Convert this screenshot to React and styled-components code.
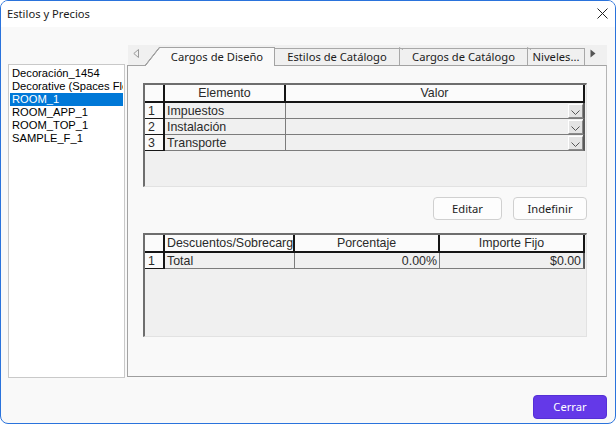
import React from "react";
import styled, { createGlobalStyle } from "styled-components";

const Global = createGlobalStyle`
  html, body { margin: 0; padding: 0; background: #ffffff; }
  * { box-sizing: border-box; }
`;

const Window = styled.div`
  width: 616px;
  height: 424px;
  border: 1px solid #2a73dc;
  border-radius: 8px;
  background: #f9f9f9;
  overflow: hidden;
  display: flex;
  flex-direction: column;
  font-family: "Noto Sans", "Open Sans", sans-serif;
  color: #1b1b1b;
`;

const TitleBar = styled.div`
  height: 26px;
  background: #ffffff;
  display: flex;
  align-items: center;
  justify-content: space-between;
  padding: 0 7px 2px 6px;
  font-size: 11.2px;
`;

const Body = styled.div`
  height: 351px;
  display: flex;
  gap: 2px;
  padding: 18px 8px 0 7px;
`;

const ListBox = styled.div`
  margin-top: 19px;
  width: 117px;
  height: 314px;
  background: #ffffff;
  border: 1px solid #c9c9c9;
  padding: 2px 1px;
  overflow: hidden;
  font-family: "Liberation Sans", Arial, sans-serif;
  font-size: 11.2px;
`;

const ListItem = styled.div`
  height: 13px;
  line-height: 13px;
  padding-left: 2px;
  white-space: nowrap;
  overflow: hidden;
  color: ${(p) => (p.$selected ? "#ffffff" : "#000000")};
  background: ${(p) => (p.$selected ? "#0078d7" : "transparent")};
`;

const TabArea = styled.div`
  flex: 1;
  display: flex;
  flex-direction: column;
`;

const TabStrip = styled.div`
  height: 20px;
  margin-left: 1px;
  background: #f0f0f0;
  display: flex;
  align-items: flex-end;
  font-size: 11.2px;
`;

const ScrollButton = styled.div`
  width: ${(p) => p.$w}px;
  height: 20px;
  display: flex;
  align-items: center;
  padding-left: ${(p) => p.$pad}px;
  padding-bottom: 3px;
`;

const ActiveTab = styled.div`
  position: relative;
  z-index: 1;
  width: 130px;
  height: 19px;
  margin-bottom: -1px;
  display: flex;
`;

const Slant = styled.span`
  width: 15px;
  height: 19px;
  background: linear-gradient(
    to bottom right,
    transparent calc(50% - 1px),
    #a3a3a3 calc(50% - 0.5px),
    #a3a3a3 calc(50% + 0.3px),
    #f9f9f9 calc(50% + 0.8px)
  );
`;

const ActiveLabel = styled.span`
  flex: 1;
  background: #f9f9f9;
  border-top: 1px solid #a3a3a3;
  border-right: 1px solid #a3a3a3;
  display: flex;
  align-items: center;
  justify-content: center;
  padding: 0 0 1px 0;
  color: #1b1b1b;
`;

const Tab = styled.div`
  position: relative;
  width: ${(p) => p.$w}px;
  height: 17px;
  border-top: 1px solid #a8a8a8;
  border-right: 1px solid #a8a8a8;
  display: flex;
  align-items: center;
  justify-content: center;
  padding-bottom: 1px;
  white-space: nowrap;
  color: #1b1b1b;

  &::after {
    content: "";
    position: absolute;
    right: -4px;
    top: -2px;
    width: 4px;
    height: 3px;
    background: linear-gradient(
      to bottom left,
      transparent calc(50% - 0.6px),
      #a8a8a8 50%,
      transparent calc(50% + 0.6px)
    );
    display: ${(p) => (p.$last ? "none" : "block")};
  }
`;

const Panel = styled.div`
  height: 312px;
  border: 1px solid #a3a3a3;
  border-right-color: #b5b5b5;
  border-bottom-color: #9e9e9e;
  background: #f9f9f9;
  padding: 17px 19px 0 15px;
  display: flex;
  flex-direction: column;
`;

const Grid = styled.div`
  height: 104px;
  background: #f0f0f0;
  border-top: 2px solid #6e6e6e;
  border-left: 2px solid #6e6e6e;
  border-right: 1px solid #e2e2e2;
  border-bottom: 1px solid #e2e2e2;
  font-family: "Liberation Sans", Arial, sans-serif;
  font-size: 12.4px;
  color: #2a2a2a;
  overflow: hidden;
`;

const Row = styled.div`
  display: flex;
  height: ${(p) => (p.$head ? 18 : 16)}px;
`;

const HeadCell = styled.div`
  width: ${(p) => p.$w}px;
  background: #fbfbfb;
  border-right: 2px solid #151515;
  border-bottom: 2px solid #151515;
  display: flex;
  align-items: center;
  justify-content: ${(p) => (p.$left ? "flex-start" : "center")};
  padding-left: ${(p) => (p.$left ? 2 : 0)}px;
  white-space: nowrap;
  overflow: hidden;
`;

const NumCell = styled.div`
  width: 20px;
  background: #fbfbfb;
  border-right: 2px solid #151515;
  border-bottom: 1px solid #151515;
  display: flex;
  align-items: center;
  padding: 1px 0 0 3px;
`;

const Cell = styled.div`
  width: ${(p) => p.$w}px;
  border-right: ${(p) => (p.$last ? "2px solid #5a5a5a" : "1px solid #7c7c7c")};
  border-bottom: 1px solid #7c7c7c;
  display: flex;
  align-items: center;
  justify-content: ${(p) => (p.$right ? "flex-end" : "flex-start")};
  padding: 1px ${(p) => (p.$right ? 2 : 0)}px 0 ${(p) => (p.$right ? 0 : 2)}px;
  white-space: nowrap;
  overflow: hidden;
`;

const DropButton = styled.span`
  width: 15px;
  height: 14px;
  margin-left: auto;
  margin-top: -1px;
  background: #e4e4e4;
  border-top: 1px solid #ffffff;
  border-left: 1px solid #ffffff;
  border-right: 1px solid #8a8a8a;
  border-bottom: 1px solid #8a8a8a;
  display: flex;
  align-items: center;
  justify-content: center;
  padding-top: 3px;
`;

const ButtonRow = styled.div`
  display: flex;
  justify-content: flex-end;
  gap: 11px;
  margin: 10px 0 13px;
`;

const Button = styled.button`
  width: ${(p) => p.$w}px;
  height: 23px;
  border: 1px solid #d0d0d0;
  border-radius: 4px;
  background: #fdfdfd;
  font-family: "Noto Sans", "Open Sans", sans-serif;
  font-size: 11.2px;
  color: #1b1b1b;
  padding: 0 0 1px;
`;

const Footer = styled.div`
  flex: 1;
  display: flex;
  justify-content: flex-end;
  padding: 17px 8px 0 0;
`;

const PrimaryButton = styled.button`
  width: 74px;
  height: 24px;
  border: 1px solid #5530d6;
  border-radius: 4px;
  background: #6439e8;
  color: #ffffff;
  font-family: "Noto Sans", "Open Sans", sans-serif;
  font-size: 11.2px;
  padding: 0 0 1px;
`;

const Chevron = () => (
  <svg width="9" height="5" viewBox="0 0 9 5">
    <path d="M0.5 0.5 L4.5 4.5 L8.5 0.5" fill="none" stroke="#555" strokeWidth="1" />
  </svg>
);

const items = [
  "Decoración_1454",
  "Decorative (Spaces Flex)",
  "ROOM_1",
  "ROOM_APP_1",
  "ROOM_TOP_1",
  "SAMPLE_F_1",
];

const cargos = ["Impuestos", "Instalación", "Transporte"];

export default function App() {
  return (
    <Window>
      <Global />
      <TitleBar>
        <span>Estilos y Precios</span>
        <svg width="11" height="11" viewBox="0 0 11 11">
          <path d="M0.5 0.5 L10.5 10.5 M10.5 0.5 L0.5 10.5" stroke="#222" strokeWidth="1" />
        </svg>
      </TitleBar>
      <Body>
        <ListBox>
          {items.map((it, i) => (
            <ListItem key={it} $selected={i === 2}>
              {it}
            </ListItem>
          ))}
        </ListBox>
        <TabArea>
          <TabStrip>
            <ScrollButton $w={17} $pad={5}>
              <svg width="6" height="9" viewBox="0 0 6 9">
                <path d="M5.5 0.5 L0.8 4.5 L5.5 8.5 Z" fill="none" stroke="#9a9a9a" strokeWidth="1" />
              </svg>
            </ScrollButton>
            <ActiveTab>
              <Slant />
              <ActiveLabel>Cargos de Diseño</ActiveLabel>
            </ActiveTab>
            <Tab $w={125}>Estilos de Catálogo</Tab>
            <Tab $w={128}>Cargos de Catálogo</Tab>
            <Tab $w={57} $last>Niveles...</Tab>
            <ScrollButton $w={21} $pad={5}>
              <svg width="6" height="9" viewBox="0 0 6 9">
                <path d="M0.5 0.5 L5.5 4.5 L0.5 8.5 Z" fill="#555" />
              </svg>
            </ScrollButton>
          </TabStrip>
          <Panel>
            <Grid>
              <Row $head>
                <HeadCell $w={20} />
                <HeadCell $w={121}>Elemento</HeadCell>
                <HeadCell $w={299}>Valor</HeadCell>
              </Row>
              {cargos.map((c, i) => (
                <Row key={c}>
                  <NumCell>{i + 1}</NumCell>
                  <Cell $w={121}>{c}</Cell>
                  <Cell $w={299} $last>
                    <DropButton>
                      <Chevron />
                    </DropButton>
                  </Cell>
                </Row>
              ))}
            </Grid>
            <ButtonRow>
              <Button $w={69}>Editar</Button>
              <Button $w={74}>Indefinir</Button>
            </ButtonRow>
            <Grid>
              <Row $head>
                <HeadCell $w={20} />
                <HeadCell $w={130} $left>Descuentos/Sobrecargos</HeadCell>
                <HeadCell $w={145}>Porcentaje</HeadCell>
                <HeadCell $w={145}>Importe Fijo</HeadCell>
              </Row>
              <Row>
                <NumCell>1</NumCell>
                <Cell $w={130}>Total</Cell>
                <Cell $w={145} $right>0.00%</Cell>
                <Cell $w={145} $right $last>$0.00</Cell>
              </Row>
            </Grid>
          </Panel>
        </TabArea>
      </Body>
      <Footer>
        <PrimaryButton>Cerrar</PrimaryButton>
      </Footer>
    </Window>
  );
}
